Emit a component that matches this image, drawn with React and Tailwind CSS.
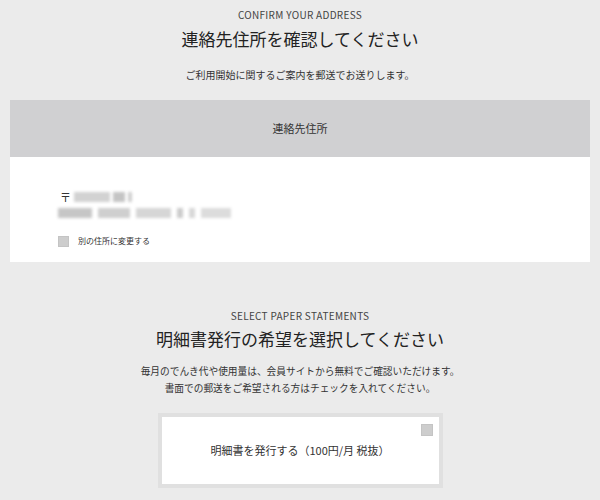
import React from 'react';

const jp = "font-['Noto_Sans_CJK_JP','Noto_Sans',sans-serif]";

function Blur({ w, shade = 'bg-[#d4d4d4]' }) {
  return <span className={`inline-block h-[10px] ${shade} blur-[1.5px]`} style={{ width: w }} />;
}

export default function App() {
  return (
    <div className={`w-[600px] h-[500px] overflow-hidden bg-[#ebebeb] text-[#333] ${jp}`}>
      {/* confirm address */}
      <section className="pt-[9px] text-center">
        <p className="text-[10px] leading-[12px] tracking-[0.3px] text-[#444]">CONFIRM YOUR ADDRESS</p>
        <h1 className="mt-[6px] text-[17px] leading-[24px] text-[#222]">連絡先住所を確認してください</h1>
        <p className="mt-[17px] text-[10px] leading-[14px]">ご利用開始に関するご案内を郵送でお送りします。</p>
      </section>

      <div className="mx-[10px] mt-[18px]">
        <div className="h-[57px] bg-[#d0d0d2] flex items-center justify-center text-[11px] text-[#333]">連絡先住所</div>
        <div className="h-[105px] bg-white pl-[48px] pt-[33px]">
          <div className="flex items-center gap-[3px] h-[14px]">
            <span className="text-[11px] leading-none ml-[2px]">〒</span>
            <Blur w="36px" shade="bg-[#d2d2d2]" />
            <Blur w="12px" shade="bg-[#c4c4c4]" />
            <Blur w="4px" shade="bg-[#cfcfcf]" />
          </div>
          <div className="flex items-center gap-[6px] h-[14px] mt-[2px]">
            <Blur w="34px" shade="bg-[#c6c6c6]" />
            <Blur w="32px" shade="bg-[#cfcfcf]" />
            <Blur w="35px" shade="bg-[#d6d6d6]" />
            <Blur w="6px" shade="bg-[#cccccc]" />
            <Blur w="6px" shade="bg-[#d8d8d8]" />
            <Blur w="30px" shade="bg-[#dcdcdc]" />
          </div>
          <label className="mt-[15px] flex items-center gap-[9px] h-[12px]">
            <span className="w-[11px] h-[11px] bg-[#cdcdcd] border border-[#c4c4c4]" />
            <span className="text-[8px] leading-none text-[#333]">別の住所に変更する</span>
          </label>
        </div>
      </div>

      {/* paper statements */}
      <section className="mt-[48px] text-center">
        <p className="text-[10px] leading-[12px] tracking-[0.3px] text-[#444]">SELECT PAPER STATEMENTS</p>
        <h2 className="mt-[5px] text-[17px] leading-[24px] text-[#222]">明細書発行の希望を選択してください</h2>
        <p className="mt-[12px] text-[9.7px] leading-[17px]">
          毎月のでんき代や使用量は、会員サイトから無料でご確認いただけます。
          <br />
          書面での郵送をご希望される方はチェックを入れてください。
        </p>
        <div className="relative mx-auto mt-[16px] w-[285px] h-[75px] border-[4px] border-[#e0e0e0] bg-white flex items-center justify-center">
          <span className="text-[11px] text-[#333]">明細書を発行する（100円/月 税抜）</span>
          <span className="absolute top-[7px] right-[6px] w-[12px] h-[12px] bg-[#cdcdcd] border border-[#c4c4c4]" />
        </div>
      </section>
    </div>
  );
}
